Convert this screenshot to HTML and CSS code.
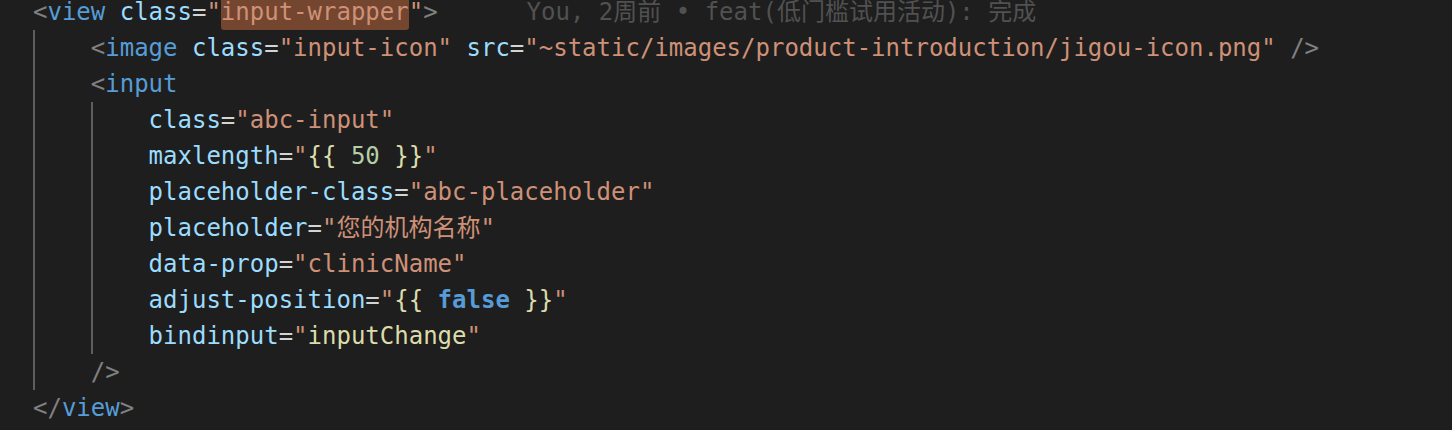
FILE: index.html
```html
<!DOCTYPE html>
<html>
<head>
<meta charset="utf-8">
<link rel="stylesheet" href="styles.css">
</head>
<body>
<div class="editor">
  <div class="line"><span class="p">&lt;</span><span class="tag">view</span> <span class="attr">class</span><span class="eq">=</span><span class="str">"<span class="hl">input-wrapper</span>"</span><span class="p">&gt;</span><span class="blame">You, 2周前 • feat(低门槛试用活动): 完成</span></div>
  <div class="block">
    <div class="line"><span class="p">&lt;</span><span class="tag">image</span> <span class="attr">class</span><span class="eq">=</span><span class="str">"input-icon"</span> <span class="attr">src</span><span class="eq">=</span><span class="str">"~static/images/product-introduction/jigou-icon.png"</span> <span class="p">/&gt;</span></div>
    <div class="line"><span class="p">&lt;</span><span class="tag">input</span></div>
    <div class="block">
      <div class="line"><span class="attr">class</span><span class="eq">=</span><span class="str">"abc-input"</span></div>
      <div class="line"><span class="attr">maxlength</span><span class="eq">=</span><span class="str">"</span><span class="br">{{</span> <span class="num">50</span> <span class="br">}}</span><span class="str">"</span></div>
      <div class="line"><span class="attr">placeholder-class</span><span class="eq">=</span><span class="str">"abc-placeholder"</span></div>
      <div class="line"><span class="attr">placeholder</span><span class="eq">=</span><span class="str">"您的机构名称"</span></div>
      <div class="line"><span class="attr">data-prop</span><span class="eq">=</span><span class="str">"clinicName"</span></div>
      <div class="line"><span class="attr">adjust-position</span><span class="eq">=</span><span class="str">"</span><span class="br">{{</span> <span class="kw">false</span> <span class="br">}}</span><span class="str">"</span></div>
      <div class="line"><span class="attr">bindinput</span><span class="eq">=</span><span class="str">"</span><span class="fn">inputChange</span><span class="str">"</span></div>
    </div>
    <div class="line"><span class="p">/&gt;</span></div>
  </div>
  <div class="line"><span class="p">&lt;/</span><span class="tag">view</span><span class="p">&gt;</span></div>
</div>
</body>
</html>
```

FILE: styles.css
```css
html, body {
  margin: 0;
  padding: 0;
  background: #1e1e1e;
  overflow: hidden;
}

.editor {
  margin-top: -6px;
  padding-left: 33px;
  font-family: "DejaVu Sans Mono", "Noto Sans CJK SC", monospace;
  font-size: 24px;
  line-height: 36px;
  color: #d4d4d4;
}

.line {
  height: 36px;
  white-space: pre;
}

.block {
  border-left: 2px solid #5e5e5e;
  padding-left: 55.8px;
}

.p { color: #808080; }
.tag { color: #569cd6; }
.attr { color: #9cdcfe; }
.eq { color: #d4d4d4; }
.str { color: #ce9178; }
.br { color: #dcdcaa; }
.num { color: #b5cea8; }
.kw { color: #569cd6; font-weight: bold; }
.fn { color: #dcdcaa; }

.hl {
  background: #74452f;
  padding: 4px 0;
  border-radius: 3px;
}

.blame {
  margin-left: 89px;
  color: #515151;
}
```
